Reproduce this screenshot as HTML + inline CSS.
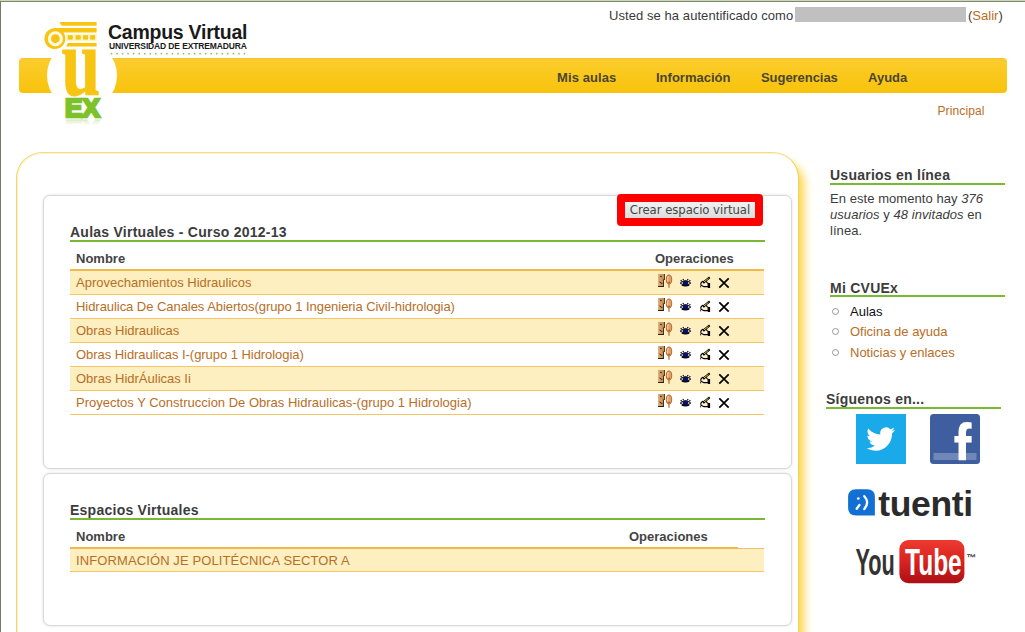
<!DOCTYPE html>
<html lang="es">
<head>
<meta charset="utf-8">
<title>Campus Virtual - Universidad de Extremadura</title>
<style>
*{box-sizing:border-box;margin:0;padding:0}
html,body{width:1025px;height:632px;overflow:hidden;background:#fff}
body{position:relative;font-family:"Liberation Sans",Arial,sans-serif;font-size:13px;color:#333}
.abs{position:absolute;white-space:nowrap}
a{color:#b86e25;text-decoration:none}
#edgeT1{left:0;top:0;width:1025px;height:1px;background:#ccd6bd}
#edgeT2{left:0;top:1px;width:1025px;height:1px;background:#7e8a6c}
#edgeL{left:0;top:1px;width:1px;height:631px;background:#747c66}
#nav{left:19px;top:58px;width:988px;height:35px;border-radius:4px;background:linear-gradient(#eebb2c 0,#fbcc2e 1px,#fac81b 50%,#f8c30e 100%);}
.menu{top:70px;font-weight:bold;font-size:13px;color:#4a4630;line-height:15px}
.login{top:8px;line-height:15px;font-size:13px;color:#3a3a3a;letter-spacing:0.07px}
#mainbox{left:16px;top:152px;width:783px;height:520px;border:1px solid #f5dc84;border-right-color:#ecd05e;border-left-color:#f3d66b;border-radius:26px 26px 0 0;box-shadow:inset 1px 1px 0 #fdf3cf,9px 6px 10px -4px #fbd548;background:#fff}
.inner{left:43px;width:749px;border:1px solid #d9d9d9;border-radius:7px;background:#fff;box-shadow:0 0 3px #dedede}
h2{position:absolute;font-size:14px;font-weight:bold;color:#3c3c3c;line-height:16px;white-space:nowrap;letter-spacing:0.25px}
.gline{position:absolute;height:2px;background:#7ab833}
.th{position:absolute;font-weight:bold;font-size:13px;color:#444;line-height:15px;white-space:nowrap}
.oline{position:absolute;height:2px;background:#f2b84a}
.row{position:absolute;left:70px;width:694px;height:24px;border-bottom:1px solid #f5c566}
.row.odd{background:#fdefc0}
.row a{position:absolute;left:6px;top:4px;line-height:15px;font-size:13px;color:#b86e25;white-space:nowrap}
.side{font-size:13px;line-height:16px;color:#3c3c3c;letter-spacing:0.06px}
.li{position:absolute;font-size:13px;line-height:15px;white-space:nowrap}
.bullet{position:absolute;width:7px;height:7px;border:1px solid #999;border-radius:50%}
</style>
</head>
<body>
<div class="abs" id="edgeT1"></div><div class="abs" id="edgeT2"></div><div class="abs" id="edgeL"></div>

<!-- top login info -->
<div class="abs login" style="left:609px">Usted se ha autentificado como</div>
<div class="abs" style="left:794.500px;top:7px;width:171px;height:15px;background:#c0c0c0"></div>
<div class="abs login" style="left:968px;letter-spacing:0.02px">(<a href="#">Salir</a>)</div>

<!-- nav bar -->
<div class="abs" id="nav"></div>
<div class="abs menu" style="left:557px;letter-spacing:0.1px">Mis aulas</div>
<div class="abs menu" style="left:656px">Información</div>
<div class="abs menu" style="left:761px;letter-spacing:-0.05px">Sugerencias</div>
<div class="abs menu" style="left:868px">Ayuda</div>

<!-- logo -->
<svg class="abs" style="left:40px;top:15px" width="90" height="115" viewBox="40 15 90 115">
  <circle cx="82" cy="75.500" r="35" fill="#fff"/>
  <g fill="#f8c412">
    <path d="M59.400 22.100 H96.600 V25.700 H61.800 Z"/>
    <path d="M55.400 28.100 H96.600 V32.600 H63.500 A10.500 10.500 0 1 1 55.400 28.100 Z"/>
    <path d="M68 43.100 H96.600 V46.600 H66 Z"/>
  </g>
  <rect x="66" y="34" width="30.600" height="7" fill="#fff6c4"/>
  <circle cx="55.400" cy="38.700" r="7.500" fill="#fffbe6"/>
  <circle cx="55.400" cy="38.700" r="4.400" fill="#f8c412"/>
  <g fill="#f8c412"><rect x="67.700" y="35.200" width="5.100" height="4.400"/><rect x="75.600" y="35.200" width="5.100" height="4.400"/><rect x="83.100" y="35.200" width="4.900" height="4.400"/><rect x="90.200" y="35.200" width="4.900" height="4.400"/></g>
  <text transform="translate(61.400,95.100) scale(0.965,1.36)" style="font-family:'Liberation Serif',serif;font-weight:bold;font-size:72px" fill="#f8c412" stroke="#f8c412" stroke-width="0.700">u</text>
  <defs><linearGradient id="rf" x1="0" y1="0" x2="0" y2="1"><stop offset="0.6" stop-color="#7dc12b" stop-opacity="0"/><stop offset="1" stop-color="#7dc12b" stop-opacity="0.350"/></linearGradient></defs>
  <text x="64.900" y="116.900" style="font-family:'Liberation Sans',sans-serif;font-weight:bold;font-size:26px;letter-spacing:0.2px" fill="#7dc12b" stroke="#7dc12b" stroke-width="2.600" stroke-linejoin="miter">EX</text>
  <text transform="translate(64.900,119.500) scale(1,-1)" style="font-family:'Liberation Sans',sans-serif;font-weight:bold;font-size:26px;letter-spacing:0.2px" fill="url(#rf)" stroke="url(#rf)" stroke-width="2.200">EX</text>
</svg>
<div class="abs" style="left:108px;top:20px;font-weight:bold;font-size:19.500px;line-height:24px;color:#1a1a1a;letter-spacing:-0.25px">Campus Virtual</div>
<div class="abs" style="left:109px;top:41px;font-weight:bold;font-size:8.500px;line-height:10px;color:#1a1a1a;letter-spacing:-0.13px">UNIVERSIDAD DE EXTREMADURA</div>
<svg class="abs" style="left:108px;top:50px" width="142" height="7" viewBox="108 50 142 7"><path d="M111.500 53.700H246" stroke="#8bc34a" stroke-width="1.700" stroke-linecap="round" stroke-dasharray="0 5.540" fill="none"/></svg>

<div class="abs" style="left:937.500px;top:104px;font-size:12px;line-height:14px;letter-spacing:0.12px"><a href="#">Principal</a></div>

<!-- main -->
<div class="abs" id="mainbox"></div>
<div class="abs inner" style="top:195px;height:274px"></div>
<div class="abs inner" style="top:473px;height:153px"></div>

<!-- create button -->
<div class="abs" style="left:617px;top:194px;width:146px;height:32px;background:#fd0000;border-radius:4px"></div>
<div class="abs" style="left:625px;top:202px;width:130px;height:16px;background:linear-gradient(#f2f2f2,#dcdcdc);font-family:'DejaVu Sans',sans-serif;font-size:11.700px;line-height:16px;color:#444;text-align:center;letter-spacing:-0.05px">Crear espacio virtual</div>

<h2 style="left:70px;top:224px">Aulas Virtuales - Curso 2012-13</h2>
<div class="gline" style="left:70px;top:240px;width:695px"></div>
<div class="th" style="left:76px;top:251px">Nombre</div>
<div class="th" style="left:655px;top:251px">Operaciones</div>
<div class="oline" style="left:70px;top:269px;width:694px"></div>

<div class="row odd" style="top:271px"><a href="#">Aprovechamientos Hidraulicos</a></div>
<div class="row" style="top:295px"><a href="#" style="letter-spacing:-0.05px">Hidraulica De Canales Abiertos(grupo 1 Ingenieria Civil-hidrologia)</a></div>
<div class="row odd" style="top:319px"><a href="#">Obras Hidraulicas</a></div>
<div class="row" style="top:343px"><a href="#" style="letter-spacing:-0.05px">Obras Hidraulicas I-(grupo 1 Hidrologia)</a></div>
<div class="row odd" style="top:367px"><a href="#">Obras HidrÁulicas Ii</a></div>
<div class="row" style="top:391px"><a href="#">Proyectos Y Construccion De Obras Hidraulicas-(grupo 1 Hidrologia)</a></div>

<svg class="abs" style="left:656px;top:271px" width="80" height="24" viewBox="656 271 80 24">
<defs><linearGradient id="mk0" x1="0" y1="0" x2="1" y2="0"><stop offset="0" stop-color="#dcaa72"/><stop offset="1" stop-color="#b9844e"/></linearGradient></defs>
<path d="M658.100 274.100H664.900V279.700L663.900 280V286.900H658.100Z" fill="url(#mk0)"/>
<path d="M664.200 274.100H664.900V279.700L663.900 280V286.900H658.100V286.100H663.100V279.600L664.200 279.300Z" fill="#2a1808"/>
<circle cx="660.900" cy="276.500" r="0.800" fill="#2a1808"/>
<path d="M659.600 281.700Q660.600 283.600 662.400 283.400" stroke="#3a200c" stroke-width="1" fill="none"/>
<ellipse cx="669" cy="279.500" rx="2.700" ry="4.500" fill="#e3a064" stroke="#a85a22" stroke-width="0.900"/>
<path d="M668.300 276.300Q667.300 278.500 667.800 281" stroke="#fbe3c2" stroke-width="0.900" fill="none"/>
<path d="M668.300 282.400H670" stroke="#a03a20" stroke-width="0.900"/>
<path d="M669 284V287.700" stroke="#b07838" stroke-width="1.300"/>
<path d="M680.200 283.100Q685.500 278.300 690.800 283.100Q685.500 287.300 680.200 283.100Z" fill="#fff" stroke="#000" stroke-width="1"/>
<ellipse cx="685.500" cy="283" rx="2.900" ry="2.500" fill="#0a1068"/>
<path d="M681.800 284.900Q685.500 287 689.200 284.900" stroke="#000" stroke-width="1.300" fill="none"/>
<path d="M683.600 280.300L682.900 279M687.400 280.300L688.100 279M681.700 281.300L680.700 280.200M689.300 281.300L690.300 280.200" stroke="#000" stroke-width="1.100"/>
<path d="M700.900 283.200L702.400 281.300L704 282.900L705.500 281L707.200 282.600L708.300 283.500V286.600H703.600L700.900 285.300Z" fill="#fdf3d0" stroke="#000" stroke-width="1.100" stroke-linejoin="round"/>
<rect x="707.800" y="283" width="2.300" height="5" fill="#000"/>
<path d="M709.700 277.400L703.200 282.600" stroke="#000" stroke-width="2"/>
<path d="M708.500 278.400L703.900 282" stroke="#e8d84a" stroke-width="0.900"/>
<rect x="700" y="286.300" width="1" height="1" fill="#000"/>
<path d="M719.300 278.300L728.700 287.600M728.700 278.300L719.300 287.600" stroke="#000" stroke-width="1.700"/>
</svg>
<svg class="abs" style="left:656px;top:295px" width="80" height="24" viewBox="656 271 80 24">
<defs><linearGradient id="mk1" x1="0" y1="0" x2="1" y2="0"><stop offset="0" stop-color="#dcaa72"/><stop offset="1" stop-color="#b9844e"/></linearGradient></defs>
<path d="M658.100 274.100H664.900V279.700L663.900 280V286.900H658.100Z" fill="url(#mk1)"/>
<path d="M664.200 274.100H664.900V279.700L663.900 280V286.900H658.100V286.100H663.100V279.600L664.200 279.300Z" fill="#2a1808"/>
<circle cx="660.900" cy="276.500" r="0.800" fill="#2a1808"/>
<path d="M659.600 281.700Q660.600 283.600 662.400 283.400" stroke="#3a200c" stroke-width="1" fill="none"/>
<ellipse cx="669" cy="279.500" rx="2.700" ry="4.500" fill="#e3a064" stroke="#a85a22" stroke-width="0.900"/>
<path d="M668.300 276.300Q667.300 278.500 667.800 281" stroke="#fbe3c2" stroke-width="0.900" fill="none"/>
<path d="M668.300 282.400H670" stroke="#a03a20" stroke-width="0.900"/>
<path d="M669 284V287.700" stroke="#b07838" stroke-width="1.300"/>
<path d="M680.200 283.100Q685.500 278.300 690.800 283.100Q685.500 287.300 680.200 283.100Z" fill="#fff" stroke="#000" stroke-width="1"/>
<ellipse cx="685.500" cy="283" rx="2.900" ry="2.500" fill="#0a1068"/>
<path d="M681.800 284.900Q685.500 287 689.200 284.900" stroke="#000" stroke-width="1.300" fill="none"/>
<path d="M683.600 280.300L682.900 279M687.400 280.300L688.100 279M681.700 281.300L680.700 280.200M689.300 281.300L690.300 280.200" stroke="#000" stroke-width="1.100"/>
<path d="M700.900 283.200L702.400 281.300L704 282.900L705.500 281L707.200 282.600L708.300 283.500V286.600H703.600L700.900 285.300Z" fill="#fdf3d0" stroke="#000" stroke-width="1.100" stroke-linejoin="round"/>
<rect x="707.800" y="283" width="2.300" height="5" fill="#000"/>
<path d="M709.700 277.400L703.200 282.600" stroke="#000" stroke-width="2"/>
<path d="M708.500 278.400L703.900 282" stroke="#e8d84a" stroke-width="0.900"/>
<rect x="700" y="286.300" width="1" height="1" fill="#000"/>
<path d="M719.300 278.300L728.700 287.600M728.700 278.300L719.300 287.600" stroke="#000" stroke-width="1.700"/>
</svg>
<svg class="abs" style="left:656px;top:319px" width="80" height="24" viewBox="656 271 80 24">
<defs><linearGradient id="mk2" x1="0" y1="0" x2="1" y2="0"><stop offset="0" stop-color="#dcaa72"/><stop offset="1" stop-color="#b9844e"/></linearGradient></defs>
<path d="M658.100 274.100H664.900V279.700L663.900 280V286.900H658.100Z" fill="url(#mk2)"/>
<path d="M664.200 274.100H664.900V279.700L663.900 280V286.900H658.100V286.100H663.100V279.600L664.200 279.300Z" fill="#2a1808"/>
<circle cx="660.900" cy="276.500" r="0.800" fill="#2a1808"/>
<path d="M659.600 281.700Q660.600 283.600 662.400 283.400" stroke="#3a200c" stroke-width="1" fill="none"/>
<ellipse cx="669" cy="279.500" rx="2.700" ry="4.500" fill="#e3a064" stroke="#a85a22" stroke-width="0.900"/>
<path d="M668.300 276.300Q667.300 278.500 667.800 281" stroke="#fbe3c2" stroke-width="0.900" fill="none"/>
<path d="M668.300 282.400H670" stroke="#a03a20" stroke-width="0.900"/>
<path d="M669 284V287.700" stroke="#b07838" stroke-width="1.300"/>
<path d="M680.200 283.100Q685.500 278.300 690.800 283.100Q685.500 287.300 680.200 283.100Z" fill="#fff" stroke="#000" stroke-width="1"/>
<ellipse cx="685.500" cy="283" rx="2.900" ry="2.500" fill="#0a1068"/>
<path d="M681.800 284.900Q685.500 287 689.200 284.900" stroke="#000" stroke-width="1.300" fill="none"/>
<path d="M683.600 280.300L682.900 279M687.400 280.300L688.100 279M681.700 281.300L680.700 280.200M689.300 281.300L690.300 280.200" stroke="#000" stroke-width="1.100"/>
<path d="M700.900 283.200L702.400 281.300L704 282.900L705.500 281L707.200 282.600L708.300 283.500V286.600H703.600L700.900 285.300Z" fill="#fdf3d0" stroke="#000" stroke-width="1.100" stroke-linejoin="round"/>
<rect x="707.800" y="283" width="2.300" height="5" fill="#000"/>
<path d="M709.700 277.400L703.200 282.600" stroke="#000" stroke-width="2"/>
<path d="M708.500 278.400L703.900 282" stroke="#e8d84a" stroke-width="0.900"/>
<rect x="700" y="286.300" width="1" height="1" fill="#000"/>
<path d="M719.300 278.300L728.700 287.600M728.700 278.300L719.300 287.600" stroke="#000" stroke-width="1.700"/>
</svg>
<svg class="abs" style="left:656px;top:343px" width="80" height="24" viewBox="656 271 80 24">
<defs><linearGradient id="mk3" x1="0" y1="0" x2="1" y2="0"><stop offset="0" stop-color="#dcaa72"/><stop offset="1" stop-color="#b9844e"/></linearGradient></defs>
<path d="M658.100 274.100H664.900V279.700L663.900 280V286.900H658.100Z" fill="url(#mk3)"/>
<path d="M664.200 274.100H664.900V279.700L663.900 280V286.900H658.100V286.100H663.100V279.600L664.200 279.300Z" fill="#2a1808"/>
<circle cx="660.900" cy="276.500" r="0.800" fill="#2a1808"/>
<path d="M659.600 281.700Q660.600 283.600 662.400 283.400" stroke="#3a200c" stroke-width="1" fill="none"/>
<ellipse cx="669" cy="279.500" rx="2.700" ry="4.500" fill="#e3a064" stroke="#a85a22" stroke-width="0.900"/>
<path d="M668.300 276.300Q667.300 278.500 667.800 281" stroke="#fbe3c2" stroke-width="0.900" fill="none"/>
<path d="M668.300 282.400H670" stroke="#a03a20" stroke-width="0.900"/>
<path d="M669 284V287.700" stroke="#b07838" stroke-width="1.300"/>
<path d="M680.200 283.100Q685.500 278.300 690.800 283.100Q685.500 287.300 680.200 283.100Z" fill="#fff" stroke="#000" stroke-width="1"/>
<ellipse cx="685.500" cy="283" rx="2.900" ry="2.500" fill="#0a1068"/>
<path d="M681.800 284.900Q685.500 287 689.200 284.900" stroke="#000" stroke-width="1.300" fill="none"/>
<path d="M683.600 280.300L682.900 279M687.400 280.300L688.100 279M681.700 281.300L680.700 280.200M689.300 281.300L690.300 280.200" stroke="#000" stroke-width="1.100"/>
<path d="M700.900 283.200L702.400 281.300L704 282.900L705.500 281L707.200 282.600L708.300 283.500V286.600H703.600L700.900 285.300Z" fill="#fdf3d0" stroke="#000" stroke-width="1.100" stroke-linejoin="round"/>
<rect x="707.800" y="283" width="2.300" height="5" fill="#000"/>
<path d="M709.700 277.400L703.200 282.600" stroke="#000" stroke-width="2"/>
<path d="M708.500 278.400L703.900 282" stroke="#e8d84a" stroke-width="0.900"/>
<rect x="700" y="286.300" width="1" height="1" fill="#000"/>
<path d="M719.300 278.300L728.700 287.600M728.700 278.300L719.300 287.600" stroke="#000" stroke-width="1.700"/>
</svg>
<svg class="abs" style="left:656px;top:367px" width="80" height="24" viewBox="656 271 80 24">
<defs><linearGradient id="mk4" x1="0" y1="0" x2="1" y2="0"><stop offset="0" stop-color="#dcaa72"/><stop offset="1" stop-color="#b9844e"/></linearGradient></defs>
<path d="M658.100 274.100H664.900V279.700L663.900 280V286.900H658.100Z" fill="url(#mk4)"/>
<path d="M664.200 274.100H664.900V279.700L663.900 280V286.900H658.100V286.100H663.100V279.600L664.200 279.300Z" fill="#2a1808"/>
<circle cx="660.900" cy="276.500" r="0.800" fill="#2a1808"/>
<path d="M659.600 281.700Q660.600 283.600 662.400 283.400" stroke="#3a200c" stroke-width="1" fill="none"/>
<ellipse cx="669" cy="279.500" rx="2.700" ry="4.500" fill="#e3a064" stroke="#a85a22" stroke-width="0.900"/>
<path d="M668.300 276.300Q667.300 278.500 667.800 281" stroke="#fbe3c2" stroke-width="0.900" fill="none"/>
<path d="M668.300 282.400H670" stroke="#a03a20" stroke-width="0.900"/>
<path d="M669 284V287.700" stroke="#b07838" stroke-width="1.300"/>
<path d="M680.200 283.100Q685.500 278.300 690.800 283.100Q685.500 287.300 680.200 283.100Z" fill="#fff" stroke="#000" stroke-width="1"/>
<ellipse cx="685.500" cy="283" rx="2.900" ry="2.500" fill="#0a1068"/>
<path d="M681.800 284.900Q685.500 287 689.200 284.900" stroke="#000" stroke-width="1.300" fill="none"/>
<path d="M683.600 280.300L682.900 279M687.400 280.300L688.100 279M681.700 281.300L680.700 280.200M689.300 281.300L690.300 280.200" stroke="#000" stroke-width="1.100"/>
<path d="M700.900 283.200L702.400 281.300L704 282.900L705.500 281L707.200 282.600L708.300 283.500V286.600H703.600L700.900 285.300Z" fill="#fdf3d0" stroke="#000" stroke-width="1.100" stroke-linejoin="round"/>
<rect x="707.800" y="283" width="2.300" height="5" fill="#000"/>
<path d="M709.700 277.400L703.200 282.600" stroke="#000" stroke-width="2"/>
<path d="M708.500 278.400L703.900 282" stroke="#e8d84a" stroke-width="0.900"/>
<rect x="700" y="286.300" width="1" height="1" fill="#000"/>
<path d="M719.300 278.300L728.700 287.600M728.700 278.300L719.300 287.600" stroke="#000" stroke-width="1.700"/>
</svg>
<svg class="abs" style="left:656px;top:391px" width="80" height="24" viewBox="656 271 80 24">
<defs><linearGradient id="mk5" x1="0" y1="0" x2="1" y2="0"><stop offset="0" stop-color="#dcaa72"/><stop offset="1" stop-color="#b9844e"/></linearGradient></defs>
<path d="M658.100 274.100H664.900V279.700L663.900 280V286.900H658.100Z" fill="url(#mk5)"/>
<path d="M664.200 274.100H664.900V279.700L663.900 280V286.900H658.100V286.100H663.100V279.600L664.200 279.300Z" fill="#2a1808"/>
<circle cx="660.900" cy="276.500" r="0.800" fill="#2a1808"/>
<path d="M659.600 281.700Q660.600 283.600 662.400 283.400" stroke="#3a200c" stroke-width="1" fill="none"/>
<ellipse cx="669" cy="279.500" rx="2.700" ry="4.500" fill="#e3a064" stroke="#a85a22" stroke-width="0.900"/>
<path d="M668.300 276.300Q667.300 278.500 667.800 281" stroke="#fbe3c2" stroke-width="0.900" fill="none"/>
<path d="M668.300 282.400H670" stroke="#a03a20" stroke-width="0.900"/>
<path d="M669 284V287.700" stroke="#b07838" stroke-width="1.300"/>
<path d="M680.200 283.100Q685.500 278.300 690.800 283.100Q685.500 287.300 680.200 283.100Z" fill="#fff" stroke="#000" stroke-width="1"/>
<ellipse cx="685.500" cy="283" rx="2.900" ry="2.500" fill="#0a1068"/>
<path d="M681.800 284.900Q685.500 287 689.200 284.900" stroke="#000" stroke-width="1.300" fill="none"/>
<path d="M683.600 280.300L682.900 279M687.400 280.300L688.100 279M681.700 281.300L680.700 280.200M689.300 281.300L690.300 280.200" stroke="#000" stroke-width="1.100"/>
<path d="M700.900 283.200L702.400 281.300L704 282.900L705.500 281L707.200 282.600L708.300 283.500V286.600H703.600L700.900 285.300Z" fill="#fdf3d0" stroke="#000" stroke-width="1.100" stroke-linejoin="round"/>
<rect x="707.800" y="283" width="2.300" height="5" fill="#000"/>
<path d="M709.700 277.400L703.200 282.600" stroke="#000" stroke-width="2"/>
<path d="M708.500 278.400L703.900 282" stroke="#e8d84a" stroke-width="0.900"/>
<rect x="700" y="286.300" width="1" height="1" fill="#000"/>
<path d="M719.300 278.300L728.700 287.600M728.700 278.300L719.300 287.600" stroke="#000" stroke-width="1.700"/>
</svg>
<h2 style="left:70px;top:502px">Espacios Virtuales</h2>
<div class="gline" style="left:70px;top:518px;width:695px"></div>
<div class="th" style="left:76px;top:529px">Nombre</div>
<div class="th" style="left:629px;top:529px">Operaciones</div>
<div class="oline" style="left:70px;top:547px;width:668px"></div><div class="abs" style="left:738px;top:548px;width:26px;height:1px;background:#ecc06c"></div>
<div class="row odd" style="top:549px;height:23px"><a href="#" style="top:4px;letter-spacing:0.11px">INFORMACIÓN JE POLITÉCNICA SECTOR A</a></div>

<!-- sidebar -->
<h2 style="left:830px;top:167px">Usuarios en línea</h2>
<div class="gline" style="left:830px;top:183px;width:175px"></div>
<div class="abs side" style="left:830px;top:191px;white-space:normal;width:175px">En este momento hay <i>376 usuarios</i> y <i>48 invitados</i> en línea.</div>

<h2 style="left:830px;top:280px">Mi CVUEx</h2>
<div class="gline" style="left:830px;top:295px;width:175px"></div>
<div class="bullet" style="left:832px;top:308px"></div><div class="li" style="left:850px;top:304px;color:#111">Aulas</div>
<div class="bullet" style="left:832px;top:328px"></div><div class="li" style="left:850px;top:324px"><a href="#">Oficina de ayuda</a></div>
<div class="bullet" style="left:832px;top:349px"></div><div class="li" style="left:850px;top:345px"><a href="#">Noticias y enlaces</a></div>

<h2 style="left:826px;top:391px">Síguenos en...</h2>
<div class="gline" style="left:826px;top:407px;width:175px"></div>


<!-- social -->
<svg class="abs" style="left:856px;top:414px" width="50" height="50" viewBox="0 0 50 50">
  <rect width="50" height="50" fill="#1aaae9"/>
  <path transform="translate(10.300,10.600) scale(1.195,1.2)" fill="#fff" d="M23.953 4.570a10 10 0 0 1-2.825.775 4.958 4.958 0 0 0 2.163-2.723c-.951.555-2.005.959-3.127 1.184a4.920 4.920 0 0 0-8.384 4.482C7.690 8.095 4.067 6.130 1.640 3.162a4.822 4.822 0 0 0-.666 2.475c0 1.710.870 3.213 2.188 4.096a4.904 4.904 0 0 1-2.228-.616v.060a4.923 4.923 0 0 0 3.946 4.827 4.996 4.996 0 0 1-2.212.085 4.936 4.936 0 0 0 4.604 3.417 9.867 9.867 0 0 1-6.102 2.105c-.390 0-.779-.023-1.170-.067a13.995 13.995 0 0 0 7.557 2.209c9.053 0 13.998-7.496 13.998-13.985 0-.210 0-.420-.015-.630A9.935 9.935 0 0 0 24 4.590z"/>
</svg>
<svg class="abs" style="left:930px;top:414px" width="50" height="50" viewBox="0 0 50 50">
  <rect width="50" height="50" rx="3.500" fill="#3f5e9f"/>
  <rect x="3.500" y="39" width="43" height="7" fill="#7088b8"/>
  <clipPath id="fbc"><rect x="0" y="0" width="50" height="46.300"/></clipPath>
  <g clip-path="url(#fbc)"><text transform="translate(23.500,58.900) scale(1,1.300)" style="font-family:'Liberation Sans',sans-serif;font-weight:bold;font-size:54px" fill="#fff">f</text></g>
</svg>
<svg class="abs" style="left:846px;top:484px" width="130" height="38" viewBox="846 484 130 38">
  <path d="M856.100 489.200H867Q874.900 489.200 874.900 497V515.600H856.100Q848.100 515.600 848.100 507.600V497Q848.100 489.200 856.100 489.200Z" fill="#1270d4"/>
  <g fill="none" stroke="#fff" stroke-width="2.300" stroke-linecap="round">
    <path d="M864.300 496.200Q870 502.300 864.300 509"/>
    <path d="M859.400 505L856.700 508.700"/>
  </g>
  <circle cx="858.300" cy="498.500" r="1.350" fill="#fff"/>
  <text x="878.200" y="515.800" style="font-family:'Liberation Sans',sans-serif;font-weight:bold;font-size:35.500px;letter-spacing:-0.35px" fill="#2b2b2b">tuenti</text>
</svg>
<svg class="abs" style="left:850px;top:536px" width="130" height="54" viewBox="850 536 130 54">
  <defs><linearGradient id="ytg" x1="0" y1="0" x2="0" y2="1"><stop offset="0" stop-color="#ee3a30"/><stop offset="0.5" stop-color="#d8231f"/><stop offset="1" stop-color="#ad1014"/></linearGradient></defs>
  <rect x="899.400" y="540" width="65" height="43.200" rx="9" fill="url(#ytg)"/>
  <text transform="translate(855.500,574.600) scale(0.595,1)" style="font-family:'Liberation Sans',sans-serif;font-weight:bold;font-size:36.500px" fill="#333">You</text>
  <text transform="translate(905,574.600) scale(0.672,1)" style="font-family:'Liberation Sans',sans-serif;font-weight:bold;font-size:36.500px" fill="#fff">Tube</text>
  <text x="966.300" y="561" style="font-family:'Liberation Sans',sans-serif;font-weight:bold;font-size:9.500px" fill="#333">™</text>
</svg>
</body>
</html>
